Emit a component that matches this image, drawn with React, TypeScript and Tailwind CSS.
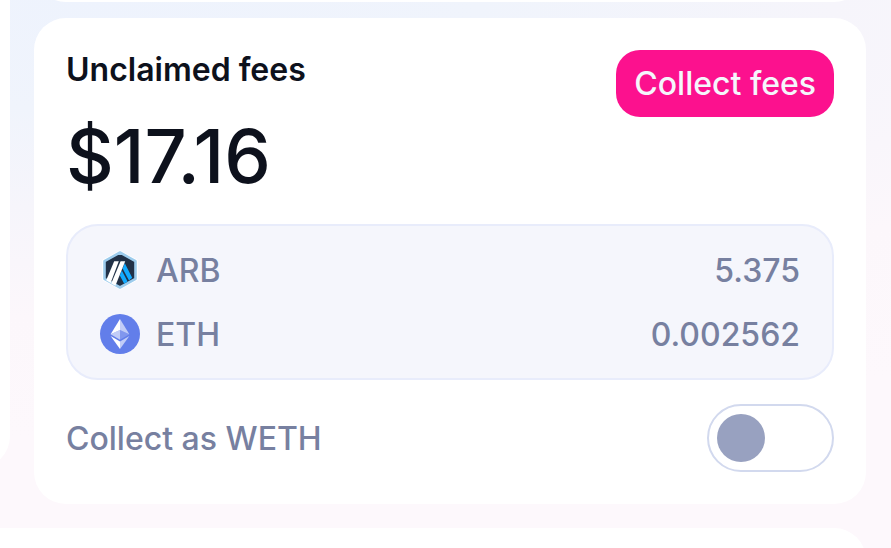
import { useState } from "react";

function ArbIcon() {
  return (
    <svg viewBox="0 0 40 40" className="size-10 shrink-0" aria-hidden="true">
      <path
        d="M20 2.500 36 11.200V28.800L20 37.500 4 28.800V11.200Z"
        fill="#fff"
        stroke="#fff"
        strokeWidth="4"
        strokeLinejoin="round"
      />
      <path
        d="M20 2.500 35.500 11.200V28.800L20 37.500 4.500 28.800V11.200Z"
        fill="#213147"
        stroke="#9dcced"
        strokeWidth="2.600"
        strokeLinejoin="round"
      />
      <path d="M24.800 13.200 32.200 27.800 29 30.500 22.600 18.500Z" fill="#12aaff" />
      <path d="M21.800 20.500 27.600 31.500 24.200 33.800 19.800 25.500Z" fill="#12aaff" />
      <path d="M14.200 11.300H18.800L10.600 33 6.200 30.300Z" fill="#fff" />
      <path d="M20.600 11.300H25.200L15.400 35.800 11.200 33.400Z" fill="#fff" />
    </svg>
  );
}

function EthIcon() {
  return (
    <svg viewBox="0 0 32 32" className="size-10 shrink-0" aria-hidden="true">
      <circle cx="16" cy="16" r="16" fill="#627eea" />
      <g fill="#fff">
        <path fillOpacity=".602" d="M16 4v8.870l7.497 3.350z" />
        <path d="M16 4L8.500 16.220l7.500-3.350z" />
        <path fillOpacity=".602" d="M16 21.968v6.027L23.500 17.616z" />
        <path d="M16 27.995v-6.028L8.500 17.616z" />
        <path fillOpacity=".2" d="M16 20.573l7.497-4.353-7.497-3.348z" />
        <path fillOpacity=".602" d="M8.500 16.220l7.500 4.353v-7.701z" />
      </g>
    </svg>
  );
}

const fees = [
  { symbol: "ARB", amount: "5.375", icon: <ArbIcon /> },
  { symbol: "ETH", amount: "0.002562", icon: <EthIcon /> },
];

export default function App() {
  const [asWeth, setAsWeth] = useState(false);

  return (
    <div className="h-screen overflow-hidden bg-[radial-gradient(220%_100%_at_10%_0%,#eef3fd_0%,#f0f4fc_20%,#f6f5fb_38%,#fcf7fb_58%,#fdf8fc_80%)] font-[Inter,sans-serif] text-[32px] leading-[39px] font-[450] text-[#7780a0]">
      <div className="-ml-14 flex items-start gap-6 pr-[25px]">
        <div className="h-[468px] w-[66px] shrink-0 rounded-br-[32px] bg-white" />

        <main className="-mt-16 grow">
          <div className="mb-4 h-[66px] rounded-[32px] bg-white" />

          <section className="rounded-[32px] bg-white p-8">
            <div className="flex items-start justify-between">
              <div>
                <h2 className="font-semibold text-[#0d111c]">Unclaimed fees</h2>
                <p className="mt-[31px] text-[74px] leading-[72px] font-medium text-[#0d111c]">
                  $17.16
                </p>
              </div>
              <button
                type="button"
                className="rounded-[24px] bg-[#fc118e] px-[18px] py-[14px] text-[#f5f6fc]"
              >
                Collect fees
              </button>
            </div>

            <ul className="mt-8 flex flex-col gap-6 rounded-[32px] border-2 border-[#e8ecfb] bg-[#f5f6fc] px-8 py-6">
              {fees.map((fee) => (
                <li key={fee.symbol} className="flex items-center gap-4">
                  {fee.icon}
                  <span className="grow">{fee.symbol}</span>
                  <span>{fee.amount}</span>
                </li>
              ))}
            </ul>

            <label className="mt-6 flex items-center justify-between">
              Collect as WETH
              <input
                type="checkbox"
                role="switch"
                checked={asWeth}
                onChange={(e) => setAsWeth(e.target.checked)}
                className="flex h-[68px] w-[127px] appearance-none rounded-full border-2 border-[#d2d9ee] bg-white p-2 before:size-12 before:rounded-full before:bg-[#98a1c0] checked:justify-end checked:before:bg-[#fc118e]"
              />
            </label>
          </section>
        </main>
      </div>

      <div className="mt-6 -ml-14 mr-[25px] h-20 rounded-[32px] bg-white" />
    </div>
  );
}
